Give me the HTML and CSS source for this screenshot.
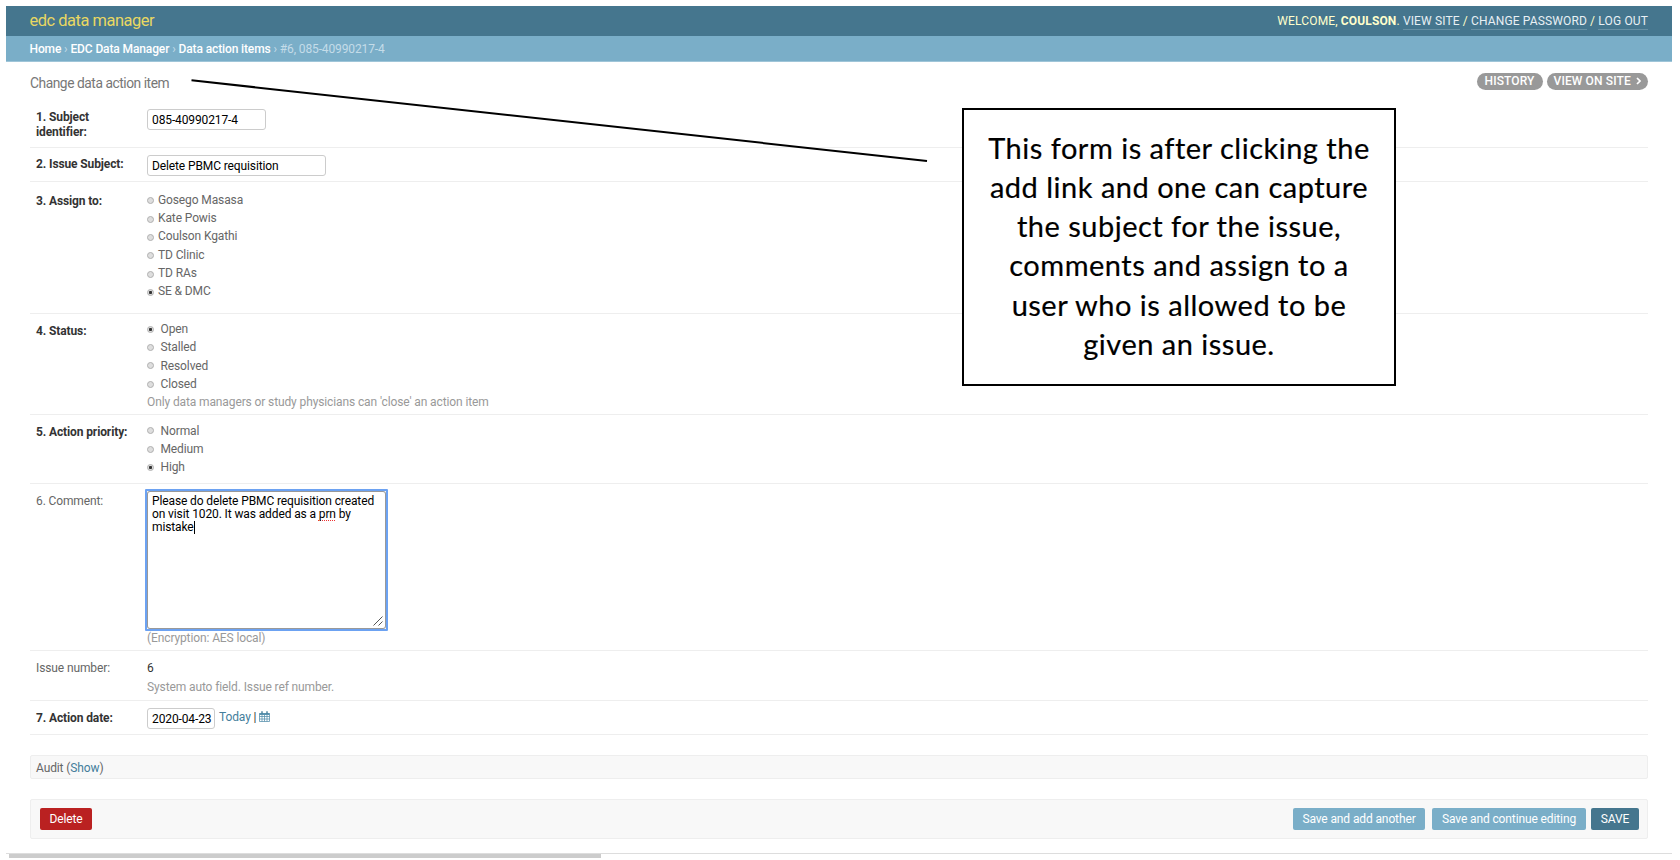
FILE: index.html
```html
<!DOCTYPE html>
<html lang="en">
<head>
<meta charset="utf-8">
<title>Change data action item</title>
<link rel="stylesheet" href="styles.css">
</head>
<body>
<div class="page">
  <header class="header">
    <div class="brand">edc data manager</div>
    <nav class="user-tools">WELCOME, <strong>COULSON</strong>. <a>VIEW SITE</a> / <a>CHANGE PASSWORD</a> / <a>LOG OUT</a></nav>
  </header>
  <div class="breadcrumbs"><b>Home</b> › <b>EDC Data Manager</b> › <b>Data action items</b> › #6, 085-40990217-4</div>
  <main class="content">
    <div class="title-row">
      <h1 class="title">Change data action item</h1>
      <div class="object-tools">
        <a class="pill">HISTORY</a>
        <a class="pill pill-site">VIEW ON SITE
          <svg class="chevron" viewBox="0 0 5 8"><path d="M1 1l3 3-3 3" fill="none" stroke="#fff" stroke-width="1.7"/></svg></a>
      </div>
    </div>
    <form class="form">
      <div class="row row-identifier">
        <label class="label required">1. Subject identifier:</label>
        <div class="field"><div class="input input-id">085-40990217-4</div></div>
      </div>
      <div class="row row-subject">
        <label class="label required">2. Issue Subject:</label>
        <div class="field"><div class="input input-subject">Delete PBMC requisition</div></div>
      </div>
      <div class="row row-assign">
        <label class="label required">3. Assign to:</label>
        <ul class="field options tight">
          <li><i class="radio"></i>Gosego Masasa</li>
          <li><i class="radio"></i>Kate Powis</li>
          <li><i class="radio"></i>Coulson Kgathi</li>
          <li><i class="radio"></i>TD Clinic</li>
          <li><i class="radio"></i>TD RAs</li>
          <li><i class="radio checked"></i>SE &amp; DMC</li>
        </ul>
      </div>
      <div class="row row-status">
        <label class="label required">4. Status:</label>
        <div class="field">
          <ul class="options">
            <li><i class="radio checked"></i>Open</li>
            <li><i class="radio"></i>Stalled</li>
            <li><i class="radio"></i>Resolved</li>
            <li><i class="radio"></i>Closed</li>
          </ul>
          <div class="help">Only data managers or study physicians can 'close' an action item</div>
        </div>
      </div>
      <div class="row row-priority">
        <label class="label required">5. Action priority:</label>
        <ul class="field options">
          <li><i class="radio"></i>Normal</li>
          <li><i class="radio"></i>Medium</li>
          <li><i class="radio checked"></i>High</li>
        </ul>
      </div>
      <div class="row row-comment">
        <label class="label">6. Comment:</label>
        <div class="field">
          <div class="textarea">
            <div>Please do delete PBMC requisition created<br>on visit 1020. It was added as a <span class="misspelt">prn</span> by<br>mistake<span class="caret"></span></div>
            <svg class="grip" viewBox="0 0 10 10"><path d="M.5 9.5l9-9M5.5 9.5l4-4" fill="none" stroke="#555" stroke-width="1"/></svg>
          </div>
          <div class="help help-comment">(Encryption: AES local)</div>
        </div>
      </div>
      <div class="row row-number">
        <label class="label">Issue number:</label>
        <div class="field">
          <div class="readonly">6</div>
          <div class="help">System auto field. Issue ref number.</div>
        </div>
      </div>
      <div class="row row-date">
        <label class="label required">7. Action date:</label>
        <div class="field date-field">
          <div class="input input-date">2020-04-23</div>
          <div class="shortcuts"><a>Today</a> |
            <svg class="calendar" viewBox="0 0 11 11"><path d="M.5 2.500h10v8h-10zM.5 5.500h10M.5 8h10M3 4v6.500M5.500 4v6.500M8 4v6.500" fill="none" stroke="#5b93af" stroke-width=".8"/><path d="M.5 2h10v2H.5z" fill="#5b93af"/><path d="M3 .3v2.500M8 .3v2.500" stroke="#447e9b" stroke-width="1.4"/></svg></div>
        </div>
      </div>
      <div class="audit">Audit (<a>Show</a>)</div>
      <div class="submit-row">
        <span class="button delete">Delete</span>
        <span class="button add">Save and add another</span>
        <span class="button continue">Save and continue editing</span>
        <span class="button save">SAVE</span>
      </div>
    </form>
  </main>
  <div class="scrollbar"><div class="thumb"></div></div>
</div>
<svg class="pointer" viewBox="0 0 1680 200"><path d="M191.500 80.300L927 161" stroke="#000" stroke-width="2" fill="none"/></svg>
<aside class="callout">
  <span>This form is after clicking the</span>
  <span>add link and one can capture</span>
  <span>the subject for the issue,</span>
  <span>comments and assign to a</span>
  <span>user who is allowed to be</span>
  <span>given an issue.</span>
</aside>
</body>
</html>
```
FILE: styles.css
```css
* { box-sizing: border-box; }
body { margin: 0; background: #fff; color: #333; font: 12px/14px Roboto, sans-serif; letter-spacing: -.115px; overflow: hidden; }
ul { margin: 0; padding: 0; list-style: none; }
.page { width: 1672px; height: 858px; padding: 6px 0 0 6px; display: flex; flex-direction: column; }
.header { height: 30px; flex: none; padding: 0 24px 0 23.5px; display: flex; align-items: center; justify-content: space-between; background: #45768e; color: #ffc; }
.brand { font-size: 16.4px; letter-spacing: -.45px; line-height: 20px; font-weight: 400; color: #e9d862; }
.user-tools { white-space: nowrap; letter-spacing: .14px; }
.user-tools strong { font-weight: 700; }
.user-tools a { color: #e8f0f4; border-bottom: 1px solid #6790a4; padding-bottom: 1px; }
.breadcrumbs { height: 26px; flex: none; padding: 6px 23.5px; background: #7aaec8; color: #c4dce8; border-bottom: 1px solid #9fc5d8; line-height: 15px; letter-spacing: -.12px; }
.breadcrumbs b { color: #fff; font-weight: 500; }
.content { flex: none; padding: 0 24px; height: 791px; }
.title-row { height: 38px; padding-top: 11px; display: flex; justify-content: space-between; align-items: flex-start; }
.title { margin: 0; font-size: 13.8px; letter-spacing: -.46px; line-height: 20px; font-weight: 400; color: #777; }
.object-tools { display: flex; gap: 4px; }
.pill { height: 17px; padding: 0 8px; border-radius: 9px; background: #999; color: #fff; font-weight: 500; line-height: 16.6px; white-space: nowrap; letter-spacing: .1px; }
.pill-site { padding: 0 7px; letter-spacing: .13px; }
.chevron { width: 5px; height: 8px; margin-left: 2px; }
.row { display: flex; border-bottom: 1px solid #eee; padding-left: 6px; }
.label { width: 111px; flex: none; color: #666; }
.required { font-weight: 700; color: #333; }
.input { border: 1px solid #ccc; border-radius: 3px; height: 21px; padding: 2.5px 4px; color: #000; white-space: nowrap; overflow: hidden; }
.input-id { width: 119px; }
.input-subject { width: 179px; }
.input-date { width: 68px; }
.row-identifier { height: 48px; padding-top: 9px; }
.row-identifier .label { padding: 1px 40px 0 0; line-height: 14.8px; }
.row-subject { height: 34px; padding-top: 7px; }
.row-subject .label { padding-top: 2px; }
.row-assign { height: 132px; padding-top: 8.7px; }
.row-assign .label { padding-top: 3px; }
.row-status { height: 101px; padding-top: 6px; }
.row-status .label { padding-top: 4px; }
.row-priority { height: 69px; padding-top: 6.7px; }
.row-priority .label { padding-top: 3px; }
.row-comment { height: 167px; padding-top: 5px; }
.row-comment .label { padding-top: 5px; }
.row-number { height: 50px; padding-top: 9px; }
.row-number .label { padding-top: 1px; }
.row-date { height: 34px; padding-top: 7px; }
.row-date .label { padding-top: 3px; }
.options { color: #666; }
.options li { height: 18.3px; line-height: 18px; display: flex; align-items: center; gap: 6.5px; }
.tight li { gap: 4px; }
.radio { width: 7px; height: 7px; border-radius: 50%; background: #dedede; border: 1px solid #b0b0b0; }
.tight .radio { margin-top: 2px; }
.checked { background: radial-gradient(circle, #333 0 1.3px, #ddd 1.9px); }
.help { color: #999; line-height: 18px; white-space: nowrap; }
.help-comment { line-height: 15px; }
.textarea { width: 243px; height: 142px; margin-left: -2px; border: 2px solid #6ca2f2; border-radius: 1px; padding: 1px; position: relative; }
.textarea > div { height: 100%; box-shadow: 0 0 0 1px #999; border-radius: 2px; padding: 3px 4px; color: #000; line-height: 13.2px; white-space: nowrap; }
.misspelt { text-decoration: underline dotted #e33 1px; text-underline-offset: 2px; text-decoration-skip-ink: none; }
.caret { display: inline-block; width: 1px; height: 13px; background: #000; vertical-align: -3px; }
.grip { position: absolute; right: 3px; bottom: 3px; width: 10px; height: 10px; }
.readonly { color: #333; line-height: 17px; padding-bottom: 1px; }
.date-field { display: flex; gap: 4px; }
.shortcuts { padding-top: 1.5px; white-space: nowrap; }
.shortcuts a, .audit a { color: #447e9b; }
.calendar { width: 11px; height: 11px; vertical-align: -1px; }
.audit { margin-top: 20px; height: 24px; padding: 5px 5px; border: 1px solid #eee; border-radius: 2px; background: #f8f8f8; color: #666; }
.submit-row { margin-top: 20px; height: 40px; padding: 8px 8px 0 9px; border: 1px solid #eee; border-radius: 2px; background: #f8f8f8; display: flex; }
.button { height: 22px; border-radius: 2px; background: #7aaec8; color: #fff; line-height: 22px; text-align: center; white-space: nowrap; }
.delete { width: 52px; background: #ba2121; margin-right: auto; }
.add { width: 132px; margin-right: 7px; }
.continue { width: 154px; margin-right: 5px; }
.save { width: 48px; background: #45768e; }
.scrollbar { border-top: 1px solid #ddd; height: 5px; padding-left: 3px; }
.thumb { width: 592px; height: 4px; background: #ccc; }
.pointer { position: absolute; left: 0; top: 0; width: 1680px; height: 200px; }
.callout { position: absolute; left: 962px; top: 108px; width: 434px; height: 278px; border: 2px solid #000; background: #fff; color: #000; font: 29px/39.2px Lato, sans-serif; letter-spacing: .5px; -webkit-text-stroke: .2px #000; padding-top: 17.8px; display: flex; flex-direction: column; align-items: center; white-space: nowrap; }
```
